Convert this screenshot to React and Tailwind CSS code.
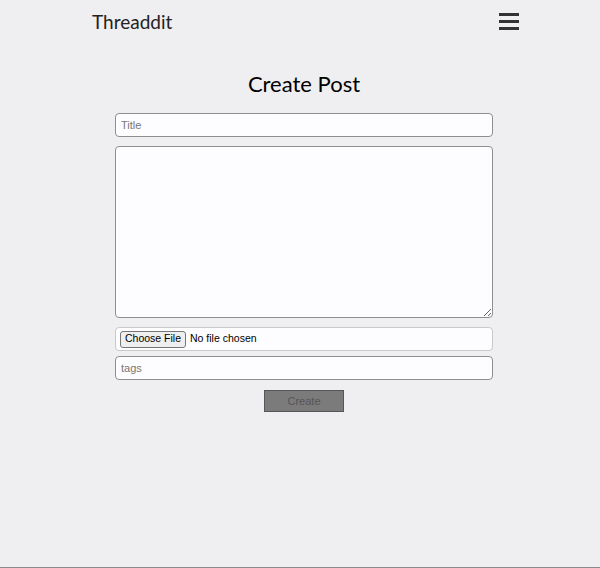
export default function App() {
  return (
    <div className="min-h-[568px] bg-[#efeef0] border-b border-[#8a8a8a] font-['Lato',sans-serif] text-[#1a1a1a]">
      <nav className="flex items-center justify-between h-[42px] pl-[92px] pr-[81px]">
        <span className="text-[19px] leading-none text-[#222]">Threaddit</span>
        <button className="flex flex-col gap-[4px] w-[20px]">
          <span className="block h-[3px] bg-[#333]" />
          <span className="block h-[3px] bg-[#333]" />
          <span className="block h-[3px] bg-[#333]" />
        </button>
      </nav>
      <main className="flex flex-col items-center pt-[31px] pl-[8px]">
        <h1 className="text-[22px] leading-none font-normal text-black">Create Post</h1>
        <form className="w-[378px] mt-[18px] flex flex-col font-['Liberation_Sans',sans-serif]">
          <input
            type="text"
            placeholder="Title"
            className="h-[24px] px-[5px] text-[11px] bg-[#fdfcfe] border border-[#8f8f8f] rounded-[4px] placeholder:text-[#777] outline-none"
          />
          <textarea className="mt-[9px] h-[172px] px-[5px] text-[11px] bg-[#fdfcfe] border border-[#8f8f8f] rounded-[4px] outline-none" />
          <div className="mt-[9px] h-[24px] flex items-center px-[4px] bg-[#fdfcfe] border border-[#c9c9c9] rounded-[4px] text-[10.5px] text-black">
            <span className="px-[4px] h-[17px] flex items-center bg-[#efefef] border border-[#767676] rounded-[3px]">Choose File</span>
            <span className="ml-[4px]">No file chosen</span>
          </div>
          <input
            type="text"
            placeholder="tags"
            className="mt-[5px] h-[24px] px-[5px] text-[11px] bg-[#fdfcfe] border border-[#8f8f8f] rounded-[4px] placeholder:text-[#777] outline-none"
          />
          <button
            type="button"
            className="self-center mt-[10px] w-[80px] h-[22px] bg-[#7b7b7b] border border-[#555] text-[11px] text-[#555]"
          >
            Create
          </button>
        </form>
      </main>
    </div>
  );
}
